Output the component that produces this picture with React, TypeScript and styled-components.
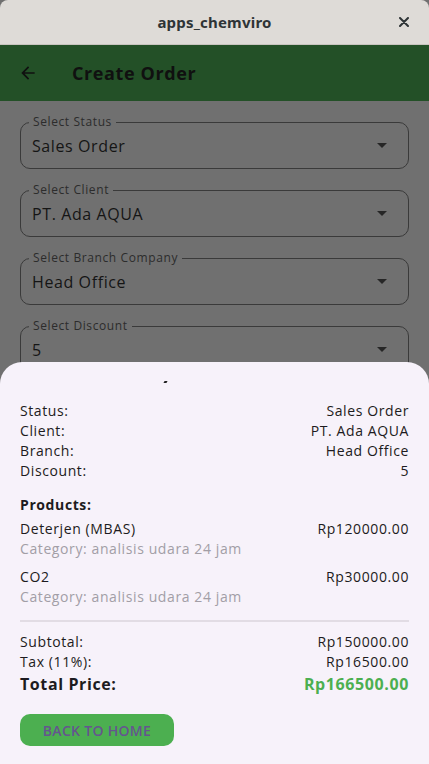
import React from "react";
import styled, { createGlobalStyle } from "styled-components";

const Global = createGlobalStyle`
  html, body { margin: 0; padding: 0; }
  body { font-family: "Open Sans", "Noto Sans", sans-serif; background: #707070; }
  * { box-sizing: border-box; }
`;

const Window = styled.div`
  width: 429px;
  height: 764px;
  display: flex;
  flex-direction: column;
  position: relative;
  overflow: hidden;
  background: #707070;
  border-radius: 8px 8px 0 0;
  letter-spacing: 0.6px;
`;

const TitleBar = styled.div`
  height: 45px;
  flex: none;
  background: #dedbd7;
  border-bottom: 1px solid #c8c4bf;
  display: flex;
  align-items: center;
  justify-content: center;
  position: relative;
  font-family: "Noto Sans", sans-serif;
  font-weight: 700;
  font-size: 15px;
  letter-spacing: 0.2px;
  color: #2e3436;
`;

const CloseBtn = styled.div`
  position: absolute;
  right: 17px;
  top: 14px;
  width: 16px;
  height: 16px;
  display: flex;
  align-items: center;
  justify-content: center;
`;

const AppBar = styled.div`
  height: 56px;
  flex: none;
  background: #235027;
  display: flex;
  align-items: center;
  padding-left: 18px;
  gap: 34px;
`;

const AppTitle = styled.div`
  font-size: 18px;
  font-weight: 700;
  color: #101010;
`;

const Form = styled.div`
  padding: 21px 20px 0;
  display: flex;
  flex-direction: column;
  gap: 21px;
`;

const Field = styled.div`
  position: relative;
  height: 47px;
  border: 1px solid #3a3a3a;
  border-radius: 10px;
  display: flex;
  align-items: center;
  justify-content: space-between;
  padding: 0 21px 0 11px;
`;

const FieldLabel = styled.span`
  position: absolute;
  top: -9px;
  left: 8px;
  padding: 0 4px;
  background: #707070;
  font-size: 12px;
  line-height: 16px;
  color: #2c2c2c;
`;

const FieldValue = styled.span`
  font-size: 16px;
  color: #151515;
`;

const Caret = styled.span`
  width: 0;
  height: 0;
  border-left: 5px solid transparent;
  border-right: 5px solid transparent;
  border-top: 5px solid #262626;
`;

const Sheet = styled.div`
  position: absolute;
  left: 0;
  right: 0;
  top: 362px;
  bottom: 0;
  background: #f7f2fa;
  border-radius: 22px 22px 0 0;
  padding: 0 20px;
  display: flex;
  flex-direction: column;
  color: #1d1b20;
`;

const Tick = styled.div`
  height: 39px;
  position: relative;
  &::after {
    content: "";
    position: absolute;
    left: 144px;
    top: 19px;
    width: 3px;
    height: 2px;
    background: #222;
    transform: skewX(-30deg);
  }
`;

const Row = styled.div<{ $gap?: number }>`
  display: flex;
  justify-content: space-between;
  align-items: baseline;
  font-size: 14px;
  line-height: 20px;
  margin-top: ${(p) => p.$gap ?? 0}px;
`;

const Label = styled.span<{ $bold?: boolean; $size?: number }>`
  font-weight: ${(p) => (p.$bold ? 700 : 400)};
  font-size: ${(p) => p.$size ?? 14}px;
`;

const Value = styled.span<{ $green?: boolean; $size?: number }>`
  font-weight: ${(p) => (p.$green ? 700 : 400)};
  font-size: ${(p) => p.$size ?? 14}px;
  color: ${(p) => (p.$green ? "#4caf50" : "#1d1b20")};
`;

const SectionTitle = styled.div`
  font-size: 14px;
  font-weight: 700;
  line-height: 20px;
  margin-top: 14px;
`;

const ProductList = styled.div`
  margin-top: 4px;
  display: flex;
  flex-direction: column;
  gap: 8px;
`;

const Product = styled.div`
  display: flex;
  flex-direction: column;
`;

const Category = styled.div`
  font-size: 14px;
  line-height: 20px;
  color: #a29ea6;
`;

const Divider = styled.div`
  height: 2px;
  background: #e2dce4;
  margin-top: 13px;
  margin-bottom: 10px;
`;

const Button = styled.button`
  margin-top: 20px;
  align-self: flex-start;
  width: 154px;
  height: 32px;
  border: none;
  border-radius: 10px;
  background: #4caf50;
  color: #65558f;
  font-family: inherit;
  font-size: 14px;
  font-weight: 600;
  letter-spacing: 0.3px;
  padding: 0;
`;

const fields = [
  ["Select Status", "Sales Order"],
  ["Select Client", "PT. Ada AQUA"],
  ["Select Branch Company", "Head Office"],
  ["Select Discount", "5"],
];

const info = [
  ["Status:", "Sales Order"],
  ["Client:", "PT. Ada AQUA"],
  ["Branch:", "Head Office"],
  ["Discount:", "5"],
];

const products = [
  ["Deterjen (MBAS)", "Rp120000.00"],
  ["CO2", "Rp30000.00"],
];

export default function App() {
  return (
    <>
      <Global />
      <Window>
        <TitleBar>
          apps_chemviro
          <CloseBtn>
            <svg width="10" height="10" viewBox="0 0 10 10">
              <path d="M1 1L9 9M9 1L1 9" stroke="#2e3436" strokeWidth="2" strokeLinecap="round" />
            </svg>
          </CloseBtn>
        </TitleBar>
        <AppBar>
          <svg width="20" height="20" viewBox="0 0 24 24">
            <path d="M20 11H7.83l5.59-5.59L12 4l-8 8 8 8 1.41-1.41L7.83 13H20v-2z" fill="#101010" />
          </svg>
          <AppTitle>Create Order</AppTitle>
        </AppBar>
        <Form>
          {fields.map(([l, v]) => (
            <Field key={l}>
              <FieldLabel>{l}</FieldLabel>
              <FieldValue>{v}</FieldValue>
              <Caret />
            </Field>
          ))}
        </Form>
        <Sheet>
          <Tick />
          {info.map(([l, v]) => (
            <Row key={l}>
              <Label>{l}</Label>
              <Value>{v}</Value>
            </Row>
          ))}
          <SectionTitle>Products:</SectionTitle>
          <ProductList>
            {products.map(([n, p]) => (
              <Product key={n}>
                <Row>
                  <Label>{n}</Label>
                  <Value>{p}</Value>
                </Row>
                <Category>Category: analisis udara 24 jam</Category>
              </Product>
            ))}
          </ProductList>
          <Divider />
          <Row>
            <Label>Subtotal:</Label>
            <Value>Rp150000.00</Value>
          </Row>
          <Row>
            <Label>Tax (11%):</Label>
            <Value>Rp16500.00</Value>
          </Row>
          <Row $gap={2}>
            <Label $bold $size={16}>Total Price:</Label>
            <Value $green $size={16}>Rp166500.00</Value>
          </Row>
          <Button>BACK TO HOME</Button>
        </Sheet>
      </Window>
    </>
  );
}
